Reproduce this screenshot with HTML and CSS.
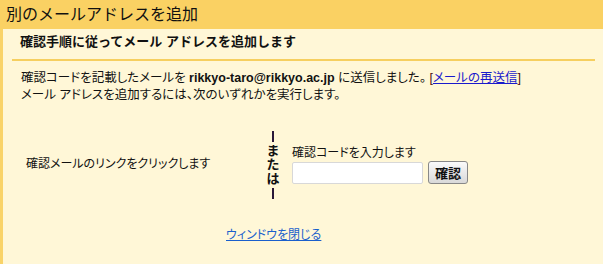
FILE: index.html
```html
<!DOCTYPE html>
<html lang="ja">
<head>
<meta charset="utf-8">
<title>別のメールアドレスを追加</title>
<link rel="stylesheet" href="styles.css">
</head>
<body>
<div class="header">別のメールアドレスを追加</div>
<div class="panel">
  <div class="heading">確認手順に従ってメール アドレスを追加します</div>
  <div class="rule"></div>
  <div class="message">
    <div>確認コードを記載したメールを <b class="email">rikkyo-taro@rikkyo.ac.jp</b> に送信しました。 <span class="bracket">[</span><a class="resend" href="#">メールの再送信</a><span class="bracket">]</span></div>
    <div>メール アドレスを追加するには、次のいずれかを実行します。</div>
  </div>
  <div class="options">
    <div class="opt-left">確認メールのリンクをクリックします</div>
    <div class="opt-or">
      <span class="bar"></span>
      <span class="or-text">ま<br>た<br>は</span>
      <span class="bar"></span>
    </div>
    <div class="opt-right">
      <div class="code-label">確認コードを入力します</div>
      <div class="code-row">
        <input class="code-input" type="text">
        <button class="confirm-btn" type="button">確認</button>
      </div>
    </div>
  </div>
  <div class="close-row"><a class="close-link" href="#">ウィンドウを閉じる</a></div>
</div>
</body>
</html>
```

FILE: styles.css
```css
html, body {
  margin: 0;
  padding: 0;
  height: 100%;
}
body {
  background: #fff7d7;
  font-family: "Liberation Sans", "Noto Sans CJK JP", sans-serif;
  font-size: 13px;
  color: #111;
  display: flex;
  flex-direction: column;
}
.header {
  background: #fad163;
  height: 29px;
  line-height: 29px;
  padding-left: 6px;
  font-size: 16px;
  color: #111;
}
.panel {
  flex: 1;
  border-left: 3px solid #f9d368;
  padding: 0 8px 0 9px;
}
.heading {
  font-weight: bold;
  padding: 5px 0 9px 8px;
  line-height: 16px;
}
.rule {
  height: 2px;
  background: #f6cf5f;
}
.message {
  padding: 9px 0 0 9px;
  line-height: 17px;
  font-size: 12.5px;
  font-feature-settings: "palt";
}
.email {
  font-size: 12.5px;
}
.bracket {
  color: #4a1010;
}
.resend {
  color: #1a1acc;
}
.options {
  display: flex;
  align-items: center;
  margin-top: 24px;
  height: 74px;
}
.opt-left {
  width: 237px;
  padding-left: 14px;
  padding-bottom: 5px;
  font-size: 12px;
  font-feature-settings: "palt";
}
.opt-or {
  width: 20px;
  display: flex;
  flex-direction: column;
  align-items: center;
  font-weight: bold;
  font-size: 13px;
}
.bar {
  width: 2px;
  height: 11px;
  background: #2a1838;
}
.or-text {
  line-height: 14px;
  padding: 2px 0;
  text-align: center;
}
.opt-right {
  padding-left: 9px;
}
.code-label {
  line-height: 14px;
  font-size: 12px;
  font-feature-settings: "palt";
  margin-bottom: 1px;
}
.code-row {
  display: flex;
  align-items: center;
  gap: 5px;
}
.code-input {
  box-sizing: border-box;
  width: 131px;
  height: 22px;
  border: 1px solid #d8d8d8;
  border-radius: 2px;
  background: #fff;
  margin: 0;
}
.confirm-btn {
  box-sizing: border-box;
  width: 40px;
  height: 23px;
  margin: 0;
  padding: 0;
  border: 1px solid #888;
  border-radius: 3px;
  background: linear-gradient(#fafafa, #d9d9d9);
  font-family: "Noto Sans CJK JP", sans-serif;
  font-weight: bold;
  font-size: 13px;
  color: #111;
  line-height: 18px;
}
.close-row {
  margin-top: 25px;
  padding-left: 214px;
  line-height: 16px;
}
.close-link {
  color: #1a5fcc;
  font-size: 12px;
  font-feature-settings: "palt";
}
```
